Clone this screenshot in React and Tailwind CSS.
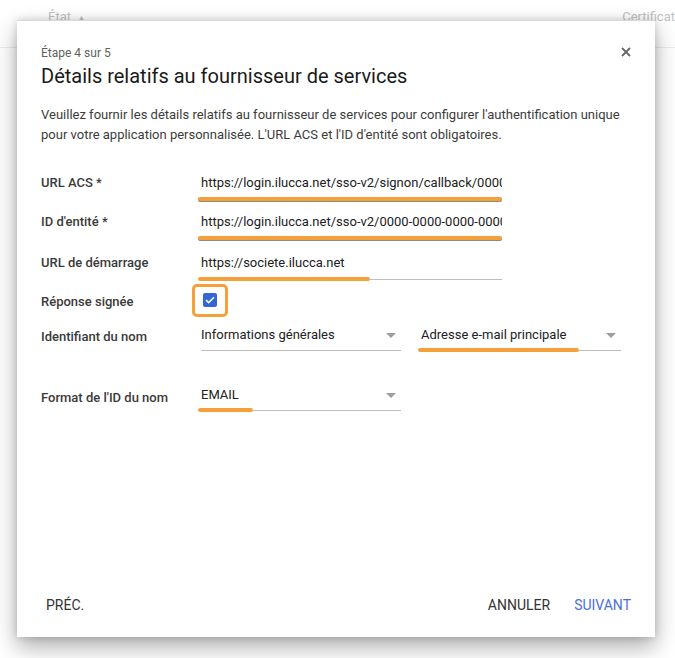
const orange = "bg-[#f5a03a]"

function Caret() {
  return (
    <svg width="10" height="5" viewBox="0 0 10 5" className="shrink-0">
      <path d="M0 0h10L5 5z" fill="#9e9e9e" />
    </svg>
  )
}

function TextField({ value, pt, bar }) {
  // bar "full" = orange over whole line, otherwise partial highlight
  return (
    <div className="flex w-[304px] flex-col" style={{ paddingTop: pt }}>
      <div className="h-[20px] overflow-hidden whitespace-nowrap pl-[3px] text-[13px] leading-[20px] text-[#202124]">
        {value}
      </div>
      <div className="mt-[4px] flex h-[4px] items-center">
        {bar === "full" ? (
          <div className={`h-[4px] flex-1 rounded-full ${orange} shadow-[0_1px_0_#8a8a8a]`} />
        ) : (
          <>
            <div className={`h-[4px] w-[172px] rounded-full ${orange}`} />
            <div className="h-px flex-1 bg-[#bdbdbd]" />
          </>
        )}
      </div>
    </div>
  )
}

function Select({ value, width, pad, barWidth }) {
  return (
    <div className="flex flex-col" style={{ width }}>
      <div className="flex h-[20px] items-center text-[13px] leading-[20px] text-[#202124]">
        <span className="flex-1 whitespace-nowrap" style={{ paddingLeft: pad }}>
          {value}
        </span>
        <span className="mr-[5px]">
          <Caret />
        </span>
      </div>
      <div className="mt-[3px] flex h-[4px] items-center">
        {barWidth ? (
          <div className={`h-[4px] rounded-full ${orange}`} style={{ width: barWidth }} />
        ) : null}
        <div className="h-px flex-1 bg-[#bdbdbd]" />
      </div>
    </div>
  )
}

function Label({ children, w = "w-[157px]", pt }) {
  return (
    <div
      className={`${w} shrink-0 text-[13px] font-medium leading-[20px] text-[#3a3a3a]`}
      style={{ paddingTop: pt }}
    >
      {children}
    </div>
  )
}

export default function App() {
  return (
    <div className="relative h-[658px] w-[675px] overflow-hidden bg-white font-['Roboto',sans-serif]">
      <div className="flex h-[48px] border-b border-[#ebebeb] pt-[9px] text-[13px] leading-[16px] text-[#c2c2c2]">
        <div className="flex w-[625px] items-start gap-[6px] pl-[48px]">
          État <span className="pt-[1px] text-[9px]">▲</span>
        </div>
        <div className="whitespace-nowrap">Certificat</div>
      </div>

      <div className="absolute left-[17px] top-[20px] flex h-[617px] w-[638px] flex-col border-t border-[#d8d8d8] bg-white shadow-[0_10px_22px_rgba(0,0,0,0.32),0_0_8px_rgba(0,0,0,0.16)]">
        <div className="flex px-[24px] pt-[24px]">
          <div className="flex-1">
            <div className="text-[12px] leading-[16px] text-[#616161]">Étape 4 sur 5</div>
            <div className="mt-[2px] text-[20px] leading-[26px] text-[#1a1a1a]">
              Détails relatifs au fournisseur de services
            </div>
          </div>
          <svg width="10" height="10" viewBox="0 0 10 10" className="mt-[2px]">
            <path d="M1 1l8 8M9 1l-8 8" stroke="#666" strokeWidth="1.8" />
          </svg>
        </div>

        <p className="mt-[16px] px-[24px] text-[13px] leading-[19.5px] text-[#3c3c3c]">
          Veuillez fournir les détails relatifs au fournisseur de services pour configurer l'authentification unique
          <br />
          pour votre application personnalisée. L'URL ACS et l'ID d'entité sont obligatoires.
        </p>

        <div className="mt-[19px] flex flex-col px-[24px]">
          <div className="flex h-[40px]">
            <Label pt={10}>URL ACS *</Label>
            <TextField pt={10} bar="full" value="https://login.ilucca.net/sso-v2/signon/callback/0000-0000-0000-0000" />
          </div>
          <div className="flex h-[39px]">
            <Label pt={9}>ID d'entité *</Label>
            <TextField pt={9} bar="full" value="https://login.ilucca.net/sso-v2/0000-0000-0000-0000" />
          </div>
          <div className="flex h-[41px]">
            <Label pt={11}>URL de démarrage</Label>
            <TextField pt={11} value="https://societe.ilucca.net" />
          </div>
          <div className="flex h-[34px] items-center">
            <Label w="w-[151px]" pt={4}>Réponse signée</Label>
            <div className="flex h-[33px] w-[36px] items-center justify-center rounded-[5px] border-[3px] border-[#f5a03a]">
              <div className="flex h-[14px] w-[14px] items-center justify-center rounded-[2px] bg-[#3367d6]">
                <svg width="10" height="8" viewBox="0 0 10 8">
                  <path d="M1 4l2.6 2.6L9 1.2" fill="none" stroke="#fff" strokeWidth="1.6" />
                </svg>
              </div>
            </div>
          </div>
          <div className="flex h-[35px] items-start">
            <Label w="w-[160px]" pt={10}>Identifiant du nom</Label>
            <div className="flex gap-[17px] pt-[8px]">
              <Select width={200} pad={0} value="Informations générales" />
              <Select width={203} pad={3} barWidth={161} value="Adresse e-mail principale" />
            </div>
          </div>
          <div className="flex items-start">
            <Label pt={36}>Format de l'ID du nom</Label>
            <div className="pt-[33px]">
              <Select width={203} pad={3} barWidth={55} value="EMAIL" />
            </div>
          </div>
        </div>

        <div className="mt-auto flex h-[64px] items-center pl-[29px] pr-[24px] text-[14px] uppercase leading-[16px]">
          <div className="text-[#333]">Préc.</div>
          <div className="ml-auto text-[#333]">Annuler</div>
          <div className="ml-[24px] text-[#4b70dc]">Suivant</div>
        </div>
      </div>
    </div>
  )
}
